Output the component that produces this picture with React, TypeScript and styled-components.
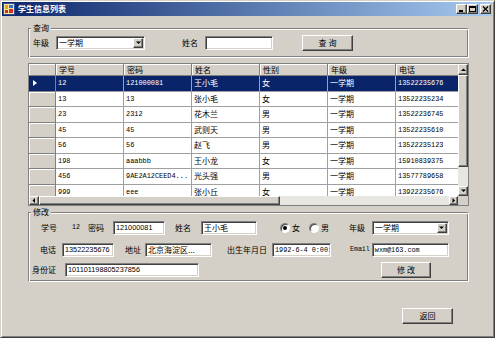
import React from 'react';
import styled, { createGlobalStyle } from 'styled-components';

const cjk = `"Noto Sans CJK SC", "Liberation Sans", sans-serif`;
const mono = `"Liberation Mono", "Noto Sans CJK SC", monospace`;
const sans = `"Liberation Sans", "Noto Sans CJK SC", sans-serif`;

const GlobalStyle = createGlobalStyle`
  html, body {
    margin: 0;
    padding: 0;
    background: #d4d0c8;
  }
  body {
    font-family: ${cjk};
  }
  * {
    box-sizing: border-box;
  }
`;

const Window = styled.div`
  width: 495px;
  height: 338px;
  display: flex;
  flex-direction: column;
  background: #d4d0c8;
  border: 1px solid;
  border-color: #d4d0c8 #404040 #404040 #d4d0c8;
  box-shadow: inset 1px 1px #fff, inset -1px -1px #808080;
  padding: 1px 2px 2px 1px;
`;

const TitleBar = styled.div`
  flex: none;
  height: 14px;
  display: flex;
  align-items: center;
  padding: 0 1px;
  background: linear-gradient(to right, #0a246a, #a6caf0);
`;

const Title = styled.span`
  margin-left: 3px;
  color: #fff;
  font-family: ${cjk};
  font-weight: 700;
  font-size: 8px;
  line-height: 10px;
`;

const CaptionButtons = styled.div`
  margin-left: auto;
  display: flex;
  gap: 0;
`;

const CaptionButton = styled.div<{ $gap?: number }>`
  width: 11px;
  height: 10px;
  margin-left: ${(p) => p.$gap || 0}px;
  display: flex;
  align-items: center;
  justify-content: center;
  background: #d4d0c8;
  border: 1px solid;
  border-color: #fff #404040 #404040 #fff;
  box-shadow: inset -1px -1px #808080;
`;

const Body = styled.div`
  flex: 1;
  display: flex;
  flex-direction: column;
  padding: 0 23px 0 26px;
`;

const Group = styled.fieldset<{ $mt: number; $pt: number; $pb: number }>`
  margin: ${(p) => p.$mt}px 0 0;
  padding: ${(p) => p.$pt}px 2px ${(p) => p.$pb}px;
  min-width: 0;
  border: 1px solid;
  border-color: #808080 #fff #fff #808080;
  box-shadow: inset 1px 1px #fff, inset -1px -1px #808080;
`;

const Legend = styled.legend`
  padding: 0 2px;
  background: #d4d0c8;
  font-family: ${cjk};
  font-size: 8px;
  line-height: 10px;
  color: #000;
`;

const FormRow = styled.div<{ $mt?: number }>`
  display: flex;
  align-items: center;
  height: 16px;
  margin-top: ${(p) => p.$mt || 0}px;
`;

const Label = styled.span<{ $ml?: number; $mono?: boolean }>`
  margin-left: ${(p) => p.$ml || 0}px;
  font-family: ${(p) => (p.$mono ? mono : cjk)};
  font-size: ${(p) => (p.$mono ? '6.6px' : '8px')};
  line-height: 10px;
  white-space: nowrap;
  color: #000;
`;

const Sunken = styled.div<{ $w: number; $ml?: number }>`
  flex: none;
  width: ${(p) => p.$w}px;
  height: 14px;
  margin-left: ${(p) => p.$ml || 0}px;
  background: #fff;
  border: 1px solid;
  border-color: #808080 #fff #fff #808080;
  box-shadow: inset 1px 1px #404040, inset -1px -1px #d4d0c8;
`;

type FontKind = 'sans' | 'mono' | 'cjk';

const fontFor = (k: FontKind) => (k === 'mono' ? mono : k === 'sans' ? sans : cjk);
const sizeFor = (k: FontKind) => (k === 'mono' ? '6.8px' : k === 'sans' ? '7.3px' : '8px');

const TextBox = styled(Sunken)<{ $font: FontKind }>`
  display: flex;
  align-items: center;
  padding: 0 2px;
  overflow: hidden;
  white-space: nowrap;
  font-family: ${(p) => fontFor(p.$font)};
  font-size: ${(p) => sizeFor(p.$font)};
  line-height: 10px;
  color: #000;
`;

const Combo = styled(Sunken)`
  display: flex;
  align-items: center;
  padding: 1px 1px 1px 2px;
`;

const ComboValue = styled.span`
  flex: 1;
  font-family: ${cjk};
  font-size: 8px;
  line-height: 10px;
  color: #000;
  white-space: nowrap;
`;

const Raised = styled.div`
  display: flex;
  align-items: center;
  justify-content: center;
  background: #d4d0c8;
  border: 1px solid;
  border-color: #fff #404040 #404040 #fff;
  box-shadow: inset -1px -1px #808080;
`;

const DropButton = styled(Raised)`
  flex: none;
  width: 10px;
  height: 10px;
`;

const PushButton = styled.button<{ $w: number; $ml?: number }>`
  flex: none;
  width: ${(p) => p.$w}px;
  height: 16px;
  margin-left: ${(p) => p.$ml || 0}px;
  padding: 0;
  background: #d4d0c8;
  border: 1px solid;
  border-color: #fff #404040 #404040 #fff;
  box-shadow: inset -1px -1px #808080;
  font-family: ${cjk};
  font-size: 8px;
  line-height: 10px;
  color: #000;
`;

const Radio = styled.span<{ $ml?: number; $checked?: boolean }>`
  flex: none;
  width: 10px;
  height: 10px;
  margin-left: ${(p) => p.$ml || 0}px;
  border-radius: 50%;
  background: #fff;
  border: 1px solid;
  border-color: #808080 #fff #fff #808080;
  box-shadow: inset 1px 1px #404040;
  display: flex;
  align-items: center;
  justify-content: center;

  &::after {
    content: '';
    width: 4px;
    height: 4px;
    border-radius: 50%;
    background: ${(p) => (p.$checked ? '#000' : 'transparent')};
  }
`;

/* data grid */

const GridFrame = styled.div`
  margin-top: 5px;
  display: flex;
  flex-direction: column;
  border: 1px solid #808080;
`;

const GridTop = styled.div`
  display: flex;
  height: 132px;
`;

const Viewport = styled.div`
  flex: 1;
  overflow: hidden;
  background: #d4d0c8;
`;

const Grid = styled.div`
  display: grid;
  grid-template-columns: 27px repeat(6, 68px);
  grid-template-rows: 12px;
  grid-auto-rows: 15.5px;
  width: max-content;
`;

const HeadCell = styled.div`
  display: flex;
  align-items: center;
  padding-left: 3px;
  background: #d4d0c8;
  border-right: 1px solid #808080;
  border-bottom: 1px solid #808080;
  box-shadow: inset 1px 1px #fff;
  font-family: ${cjk};
  font-size: 8px;
  line-height: 10px;
  color: #000;
`;

const RowHead = styled.div<{ $sel?: boolean }>`
  display: flex;
  align-items: center;
  padding-left: 4px;
  background: ${(p) => (p.$sel ? '#0a246a' : '#d4d0c8')};
  border-right: 1px solid #808080;
  border-bottom: 1px solid #808080;
  box-shadow: inset 1px 1px ${(p) => (p.$sel ? '#0a246a' : '#fff')};
`;

const DataCell = styled.div<{ $sel?: boolean; $cjk?: boolean }>`
  display: flex;
  align-items: center;
  padding-left: 2px;
  overflow: hidden;
  white-space: nowrap;
  background: ${(p) => (p.$sel ? '#0a246a' : '#fff')};
  color: ${(p) => (p.$sel ? '#fff' : '#000')};
  border-right: 1px solid #a0a0a0;
  border-bottom: 1px solid #a0a0a0;
  font-family: ${(p) => (p.$cjk ? cjk : mono)};
  font-size: ${(p) => (p.$cjk ? '8px' : '6.9px')};
  line-height: 10px;
`;

const VScroll = styled.div`
  flex: none;
  width: 10px;
  display: flex;
  flex-direction: column;
  background: #e8e6e1;
`;

const HScroll = styled.div`
  flex: 1;
  height: 9px;
  display: flex;
  background: #e8e6e1;
`;

const ScrollButton = styled(Raised)<{ $w: number; $h: number }>`
  flex: none;
  width: ${(p) => p.$w}px;
  height: ${(p) => p.$h}px;
`;

const Thumb = styled(Raised)<{ $w?: number; $h?: number }>`
  flex: none;
  width: ${(p) => (p.$w ? `${p.$w}px` : 'auto')};
  height: ${(p) => (p.$h ? `${p.$h}px` : 'auto')};
`;

const GridBottom = styled.div`
  display: flex;
`;

const Corner = styled.div`
  width: 10px;
  height: 9px;
  background: #d4d0c8;
`;

const Footer = styled.div`
  flex: 1;
  display: flex;
  justify-content: flex-end;
  align-items: flex-start;
  padding: 26px 16px 0 0;
`;

type Dir = 'up' | 'down' | 'left' | 'right';

const Arrow = ({ dir }: { dir: Dir }) => {
  const horizontal = dir === 'left' || dir === 'right';
  const pts = {
    up: '0,3 5,3 2.5,0.5',
    down: '0,0.5 5,0.5 2.5,3',
    left: '3,0 3,5 0.5,2.5',
    right: '0.5,0 0.5,5 3,2.5',
  }[dir];
  return (
    <svg width={horizontal ? 4 : 5} height={horizontal ? 5 : 4} viewBox={horizontal ? '0 0 4 5' : '0 0 5 4'}>
      <polygon points={pts} fill="#000" />
    </svg>
  );
};

const AppIcon = () => (
  <svg width="12" height="12" viewBox="0 0 12 12">
    <rect x="0.5" y="0.5" width="11" height="11" fill="#f3e3a0" stroke="#2f4f9f" />
    <rect x="2" y="2" width="3" height="4" fill="#e8a020" />
    <rect x="6" y="2" width="4" height="3" fill="#3a6fd0" />
    <rect x="2" y="7" width="3" height="3" fill="#d03020" />
    <rect x="6" y="6" width="4" height="4" fill="#d03020" />
  </svg>
);

const MinGlyph = () => (
  <svg width="7" height="6" viewBox="0 0 7 6">
    <rect x="1" y="4" width="4" height="2" fill="#000" />
  </svg>
);

const MaxGlyph = () => (
  <svg width="7" height="6" viewBox="0 0 7 6">
    <rect x="0.5" y="0.5" width="6" height="5" fill="none" stroke="#000" />
    <rect x="0" y="0" width="7" height="2" fill="#000" />
  </svg>
);

const CloseGlyph = () => (
  <svg width="7" height="6" viewBox="0 0 7 6">
    <path d="M1 0.5 L6 5.5 M6 0.5 L1 5.5" stroke="#000" strokeWidth="1.4" />
  </svg>
);

const RowMarker = () => (
  <svg width="4" height="6" viewBox="0 0 4 6">
    <polygon points="0,0 4,3 0,6" fill="#fff" />
  </svg>
);

const headers = ['学号', '密码', '姓名', '性别', '年级', '电话'];

const rows: string[][] = [
  ['12', '121000081', '王小毛', '女', '一学期', '13522235676'],
  ['13', '13', '张小毛', '女', '一学期', '13522235234'],
  ['23', '2312', '花木兰', '男', '一学期', '13522236745'],
  ['45', '45', '武则天', '男', '一学期', '13522235610'],
  ['56', '56', '赵飞', '男', '一学期', '13522235123'],
  ['198', 'aaabbb', '王小龙', '女', '一学期', '15910839375'],
  ['456', '9AE2A12CEED4...', '光头强', '男', '一学期', '13577789658'],
  ['999', 'eee', '张小丘', '女', '一学期', '13922235676'],
];

const isCjk = (s: string) => /[\u4e00-\u9fff]/.test(s);

const DropDown = ({ w, ml, value }: { w: number; ml: number; value: string }) => (
  <Combo $w={w} $ml={ml}>
    <ComboValue>{value}</ComboValue>
    <DropButton>
      <Arrow dir="down" />
    </DropButton>
  </Combo>
);

export default function App() {
  return (
    <>
      <GlobalStyle />
      <Window>
        <TitleBar>
          <AppIcon />
          <Title>学生信息列表</Title>
          <CaptionButtons>
            <CaptionButton>
              <MinGlyph />
            </CaptionButton>
            <CaptionButton>
              <MaxGlyph />
            </CaptionButton>
            <CaptionButton $gap={2}>
              <CloseGlyph />
            </CaptionButton>
          </CaptionButtons>
        </TitleBar>

        <Body>
          <Group $mt={7} $pt={2} $pb={6}>
            <Legend>查询</Legend>
            <FormRow>
              <Label $ml={2}>年级</Label>
              <DropDown w={89} ml={7} value="一学期" />
              <Label $ml={37}>姓名</Label>
              <TextBox $w={68} $ml={7} $font="cjk" />
              <PushButton $w={51} $ml={29}>
                查 询
              </PushButton>
            </FormRow>
          </Group>

          <GridFrame>
            <GridTop>
              <Viewport>
                <Grid>
                  <HeadCell />
                  {headers.map((h) => (
                    <HeadCell key={h}>{h}</HeadCell>
                  ))}
                  {rows.map((r, i) => (
                    <React.Fragment key={r[0]}>
                      <RowHead $sel={i === 0}>{i === 0 && <RowMarker />}</RowHead>
                      {r.map((v, j) => (
                        <DataCell key={j} $sel={i === 0} $cjk={isCjk(v)}>
                          {v}
                        </DataCell>
                      ))}
                    </React.Fragment>
                  ))}
                </Grid>
              </Viewport>
              <VScroll>
                <ScrollButton $w={10} $h={11}>
                  <Arrow dir="up" />
                </ScrollButton>
                <Thumb $h={92} />
                <div style={{ flex: 1 }} />
                <ScrollButton $w={10} $h={10}>
                  <Arrow dir="down" />
                </ScrollButton>
              </VScroll>
            </GridTop>
            <GridBottom>
              <HScroll>
                <ScrollButton $w={10} $h={9}>
                  <Arrow dir="left" />
                </ScrollButton>
                <Thumb $w={241} />
                <div style={{ flex: 1 }} />
                <ScrollButton $w={9} $h={9}>
                  <Arrow dir="right" />
                </ScrollButton>
              </HScroll>
              <Corner />
            </GridBottom>
          </GridFrame>

          <Group $mt={1} $pt={3} $pb={3}>
            <Legend>修改</Legend>
            <FormRow>
              <Label $ml={10}>学号</Label>
              <Label $ml={15} $mono>
                12
              </Label>
              <Label $ml={8}>密码</Label>
              <TextBox $w={52} $ml={9} $font="sans">
                121000081
              </TextBox>
              <Label $ml={10}>姓名</Label>
              <TextBox $w={56} $ml={10} $font="cjk">
                王小毛
              </TextBox>
              <Radio $ml={23} $checked />
              <Label $ml={2}>女</Label>
              <Radio $ml={9} />
              <Label $ml={2}>男</Label>
              <Label $ml={20}>年级</Label>
              <DropDown w={77} ml={7} value="一学期" />
            </FormRow>
            <FormRow $mt={6}>
              <Label $ml={9}>电话</Label>
              <TextBox $w={52} $ml={6} $font="sans">
                13522235676
              </TextBox>
              <Label $ml={11}>地址</Label>
              <TextBox $w={67} $ml={4} $font="cjk">
                北京海淀区...
              </TextBox>
              <Label $ml={15}>出生年月日</Label>
              <TextBox $w={59} $ml={5} $font="mono">
                1992-6-4 0:00:
              </TextBox>
              <Label $ml={19} $mono>
                Email
              </Label>
              <TextBox $w={77} $ml={2} $font="mono">
                wxm@163.com
              </TextBox>
            </FormRow>
            <FormRow $mt={4}>
              <Label $ml={1}>身份证</Label>
              <TextBox $w={134} $ml={9} $font="sans">
                101101198805237856
              </TextBox>
              <PushButton $w={50} $ml={182}>
                修 改
              </PushButton>
            </FormRow>
          </Group>

          <Footer>
            <PushButton $w={51}>返回</PushButton>
          </Footer>
        </Body>
      </Window>
    </>
  );
}
